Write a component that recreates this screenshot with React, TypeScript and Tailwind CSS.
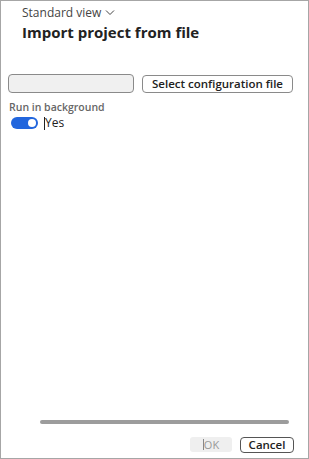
import React from "react";

export default function App() {
  return (
    <div
      className="w-[309px] h-[459px] bg-white border border-[#a6a6a6] flex flex-col text-[#222]"
      style={{ fontFamily: '"Open Sans", "Noto Sans", sans-serif' }}
    >
      <div className="pl-[21px] pt-[4px]">
        <div className="flex items-center gap-[4px] text-[12px] leading-[16px] text-[#444]">
          <span>Standard view</span>
          <svg width="10" height="6" viewBox="0 0 10 6" fill="none" stroke="#444" strokeWidth="1">
            <path d="M1 0.5 L5 4.5 L9 0.5" />
          </svg>
        </div>
        <div className="mt-[1px] text-[15px] leading-[20px] font-bold text-[#222]">Import project from file</div>
      </div>

      <div className="px-[7px] mt-[32px] flex items-center gap-[8px]">
        <div className="w-[126px] h-[19px] rounded-[4px] border border-[#8a8a8a] bg-[#f0f0f0]" />
        <button className="h-[18px] w-[151px] rounded-[4px] border border-[#8a8a8a] bg-white text-[11.5px] font-semibold leading-[16px] text-[#222] flex items-center justify-center whitespace-nowrap">
          Select configuration file
        </button>
      </div>

      <div className="px-[8px] mt-[7px] text-[10.5px] leading-[14px] font-semibold text-[#666]">Run in background</div>
      <div className="pl-[10px] mt-[1px] flex items-center gap-[6px]">
        <div className="w-[27px] h-[12px] rounded-full bg-[#2266dd] flex items-center justify-end pr-[2px]">
          <div className="w-[8px] h-[8px] rounded-full bg-white" />
        </div>
        <div className="flex items-center text-[12px] leading-[16px] text-[#222]">
          <span className="w-px h-[13px] bg-[#222]" />
          <span>Yes</span>
        </div>
      </div>

      <div className="flex-1" />

      <div className="pl-[39px] pr-[19px]">
        <div className="h-[4px] rounded-full bg-[#9c9c9c]" />
      </div>

      <div className="mt-[13px] mb-[5px] pr-[14px] flex justify-end gap-[8px]">
        <div className="w-[42px] h-[15px] rounded-[3px] bg-[#efefef] text-[11px] leading-[15px] text-[#999] flex items-center justify-center">
          <span className="w-px h-[11px] bg-[#888]" />
          <span>OK</span>
        </div>
        <button className="w-[54px] h-[16px] rounded-[4px] border border-[#555] bg-white text-[11.5px] font-semibold leading-[14px] text-[#222] flex items-center justify-center">
          Cancel
        </button>
      </div>
    </div>
  );
}
